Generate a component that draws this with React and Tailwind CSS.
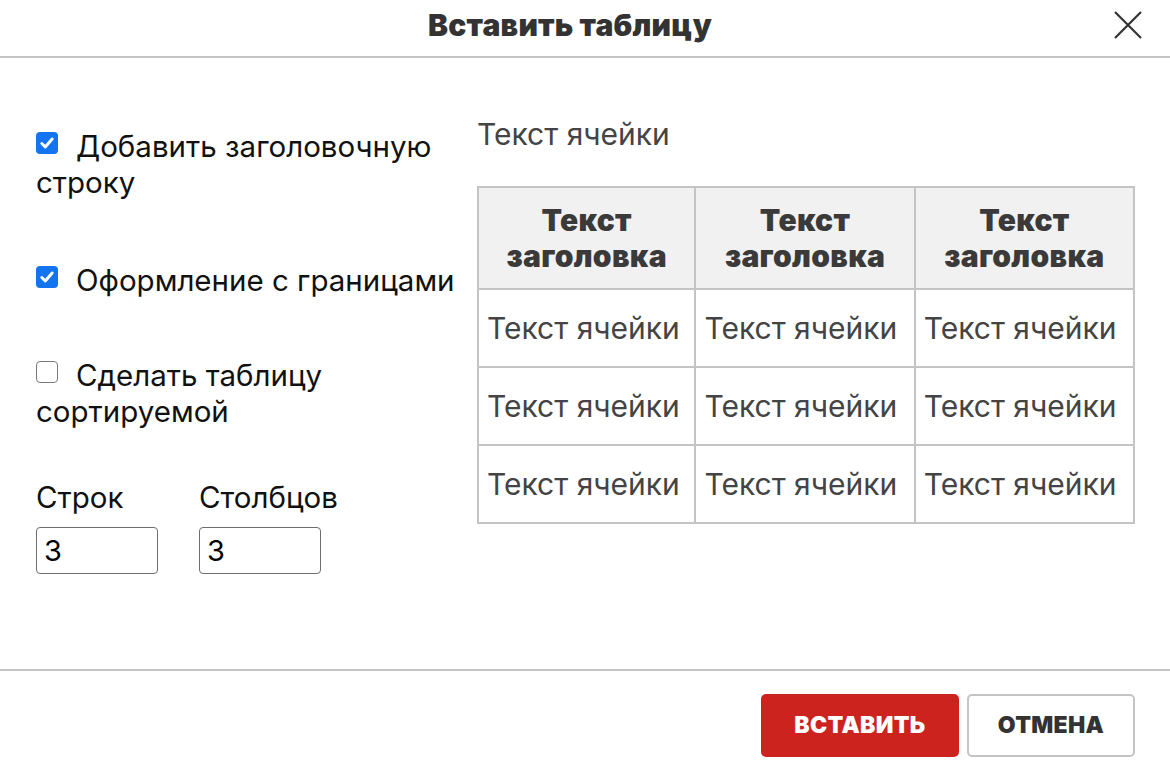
import React from "react";

const Check = ({ checked }) =>
  checked ? (
    <span className="flex h-[22px] w-[22px] items-center justify-center rounded-[4px] bg-[#1473ef]">
      <svg width="16" height="16" viewBox="0 0 14 14" fill="none">
        <path d="M2.5 7.5l3 3 6-7" stroke="#fff" strokeWidth="2.6" strokeLinecap="round" strokeLinejoin="round" />
      </svg>
    </span>
  ) : (
    <span className="block h-[22px] w-[22px] rounded-[4px] border-[1.5px] border-[#7a7a7a] bg-white" />
  );

const Option = ({ checked, first, rest, className }) => (
  <div className={"relative pl-[40px] leading-[36px] " + className}>
    <span className="absolute left-0 top-[4px] block h-[22px] w-[22px]">
      <Check checked={checked} />
    </span>
    {first}
    {rest && <div className="-ml-[40px]">{rest}</div>}
  </div>
);

export default function App() {
  const cols = [218, 220, 220];
  return (
    <div className="flex h-[784px] w-[1170px] flex-col bg-white font-['Inter',sans-serif] text-[#111]">
      <header className="relative flex h-[58px] shrink-0 items-center justify-center border-b-2 border-[#c4c4c4] pb-[6px] pr-[30px]">
        <h1 className="text-[30px] font-black tracking-[0.2px] text-[#333]">Вставить таблицу</h1>
        <button className="absolute right-[28px] top-[11px]">
          <svg width="28" height="28" viewBox="0 0 28 28" fill="none">
            <path d="M1 1l26 26M27 1L1 27" stroke="#333" strokeWidth="2.2" />
          </svg>
        </button>
      </header>

      <main className="flex flex-1 pl-[36px] pr-[35px] pt-[70px]">
        <div className="flex w-[441px] flex-col text-[29.5px]">
          <Option checked first="Добавить заголовочную" rest="строку" />
          <Option checked first="Оформление с границами" className="mt-[62px]" />
          <Option first="Сделать таблицу" rest="сортируемой" className="mt-[59px]" />
          <div className="mt-[50px] flex gap-[41px]">
            {["Строк", "Столбцов"].map((l) => (
              <div key={l} className="flex flex-col">
                <span className="leading-[36px]">{l}</span>
                <input
                  defaultValue="3"
                  className="mt-[12px] h-[47px] w-[122px] rounded-[4px] border-[1.5px] border-[#6e6e6e] px-[7px] text-[29px] leading-none text-black outline-none"
                />
              </div>
            ))}
          </div>
        </div>

        <div className="flex flex-1 flex-col text-[30px] text-[#444]">
          <p className="-mt-[12px] leading-[36px]">Текст ячейки</p>
          <table className="mt-[34px] border-collapse border-2 border-[#c4c4c4]">
            <thead>
              <tr className="h-[102px] bg-[#f1f1f1]">
                {cols.map((w, i) => (
                  <th
                    key={i}
                    style={{ width: w }}
                    className="border-2 border-[#c4c4c4] px-1 text-center text-[30px] font-black leading-[36px] tracking-[0.3px] text-[#3a3a3a]"
                  >
                    Текст
                    <br />
                    заголовка
                  </th>
                ))}
              </tr>
            </thead>
            <tbody>
              {[0, 1, 2].map((r) => (
                <tr key={r} className="h-[78px]">
                  {cols.map((w, i) => (
                    <td key={i} className="whitespace-nowrap border-2 border-[#c4c4c4] pl-[8px] pr-1">
                      Текст ячейки
                    </td>
                  ))}
                </tr>
              ))}
            </tbody>
          </table>
        </div>
      </main>

      <footer className="flex h-[115px] shrink-0 items-start justify-end gap-[8px] border-t-2 border-[#c4c4c4] pr-[35px] pt-[23px]">
        <button className="h-[63px] w-[198px] rounded-[5px] bg-[#cd231f] text-[23px] font-black tracking-[0.3px] text-white">
          ВСТАВИТЬ
        </button>
        <button className="h-[63px] w-[168px] rounded-[5px] border-2 border-[#c4c4c4] bg-white text-[23px] font-black tracking-[0.3px] text-[#333]">
          ОТМЕНА
        </button>
      </footer>
    </div>
  );
}
